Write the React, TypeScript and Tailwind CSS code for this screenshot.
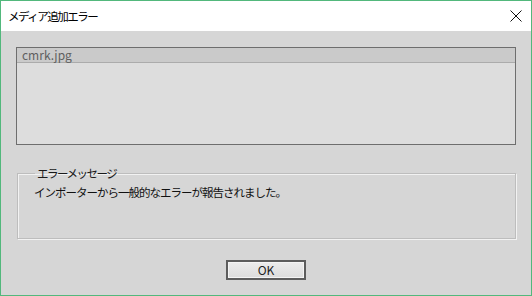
import { useState } from 'react';

const font = { fontFamily: '"Noto Sans CJK JP", "Noto Sans", sans-serif' };

function CloseIcon() {
  return (
    <svg width="12" height="12" viewBox="0 0 12 12" className="block">
      <path d="M0.5 0.5 L11.5 11.5 M11.5 0.5 L0.5 11.5" stroke="#111" strokeWidth="1" fill="none" />
    </svg>
  );
}

export default function App() {
  const [files] = useState(['cmrk.jpg']);

  return (
    <div
      className="w-[532px] h-[296px] border border-[#52b87c] flex flex-col bg-[#d6d6d6] text-[12px] leading-[16px] text-[#1a1a1a]"
      style={font}
    >
      {/* Title bar */}
      <div className="h-[30px] bg-white flex items-center justify-between pl-[7px] pr-[9px] shrink-0">
        <span className="text-[11.5px] tracking-[-1.5px] text-black">メディア追加エラー</span>
        <CloseIcon />
      </div>

      {/* Body */}
      <div className="flex-1 flex flex-col px-[15px] pt-[16px]">
        {/* File list */}
        <div className="h-[98px] border border-[#6e6e6e] bg-[#dddddd] shrink-0">
          {files.map((f) => (
            <div
              key={f}
              className="h-[15px] bg-[#cacaca] border-b border-[#ababab] pl-[5px] text-[#5f5f5f] leading-[14px]"
            >
              {f}
            </div>
          ))}
        </div>

        {/* Error message group */}
        <fieldset className="mt-[20px] ml-[1px] h-[74px] border border-[#bdbdbd] shadow-[1px_1px_0_#f2f2f2,inset_1px_1px_0_#f2f2f2] px-[15px] shrink-0">
          <legend className="ml-[2px] px-[2px] leading-[16px] text-[11.5px] tracking-[-1.5px]">エラーメッセージ</legend>
          <p className="mt-[3px] ml-[1px] text-[11.5px] tracking-[-1px] text-[#111]">インポーターから一般的なエラーが報告されました。</p>
        </fieldset>

        {/* Button */}
        <div className="flex justify-center mt-[21px]">
          <button className="w-[80px] h-[20px] border-2 border-[#5c5c5c] bg-gradient-to-b from-[#ececec] to-[#dcdcdc] shadow-[inset_0_0_0_1px_#f4f4f4] text-[12px] leading-[14px] text-[#222]">
            OK
          </button>
        </div>
      </div>
    </div>
  );
}
